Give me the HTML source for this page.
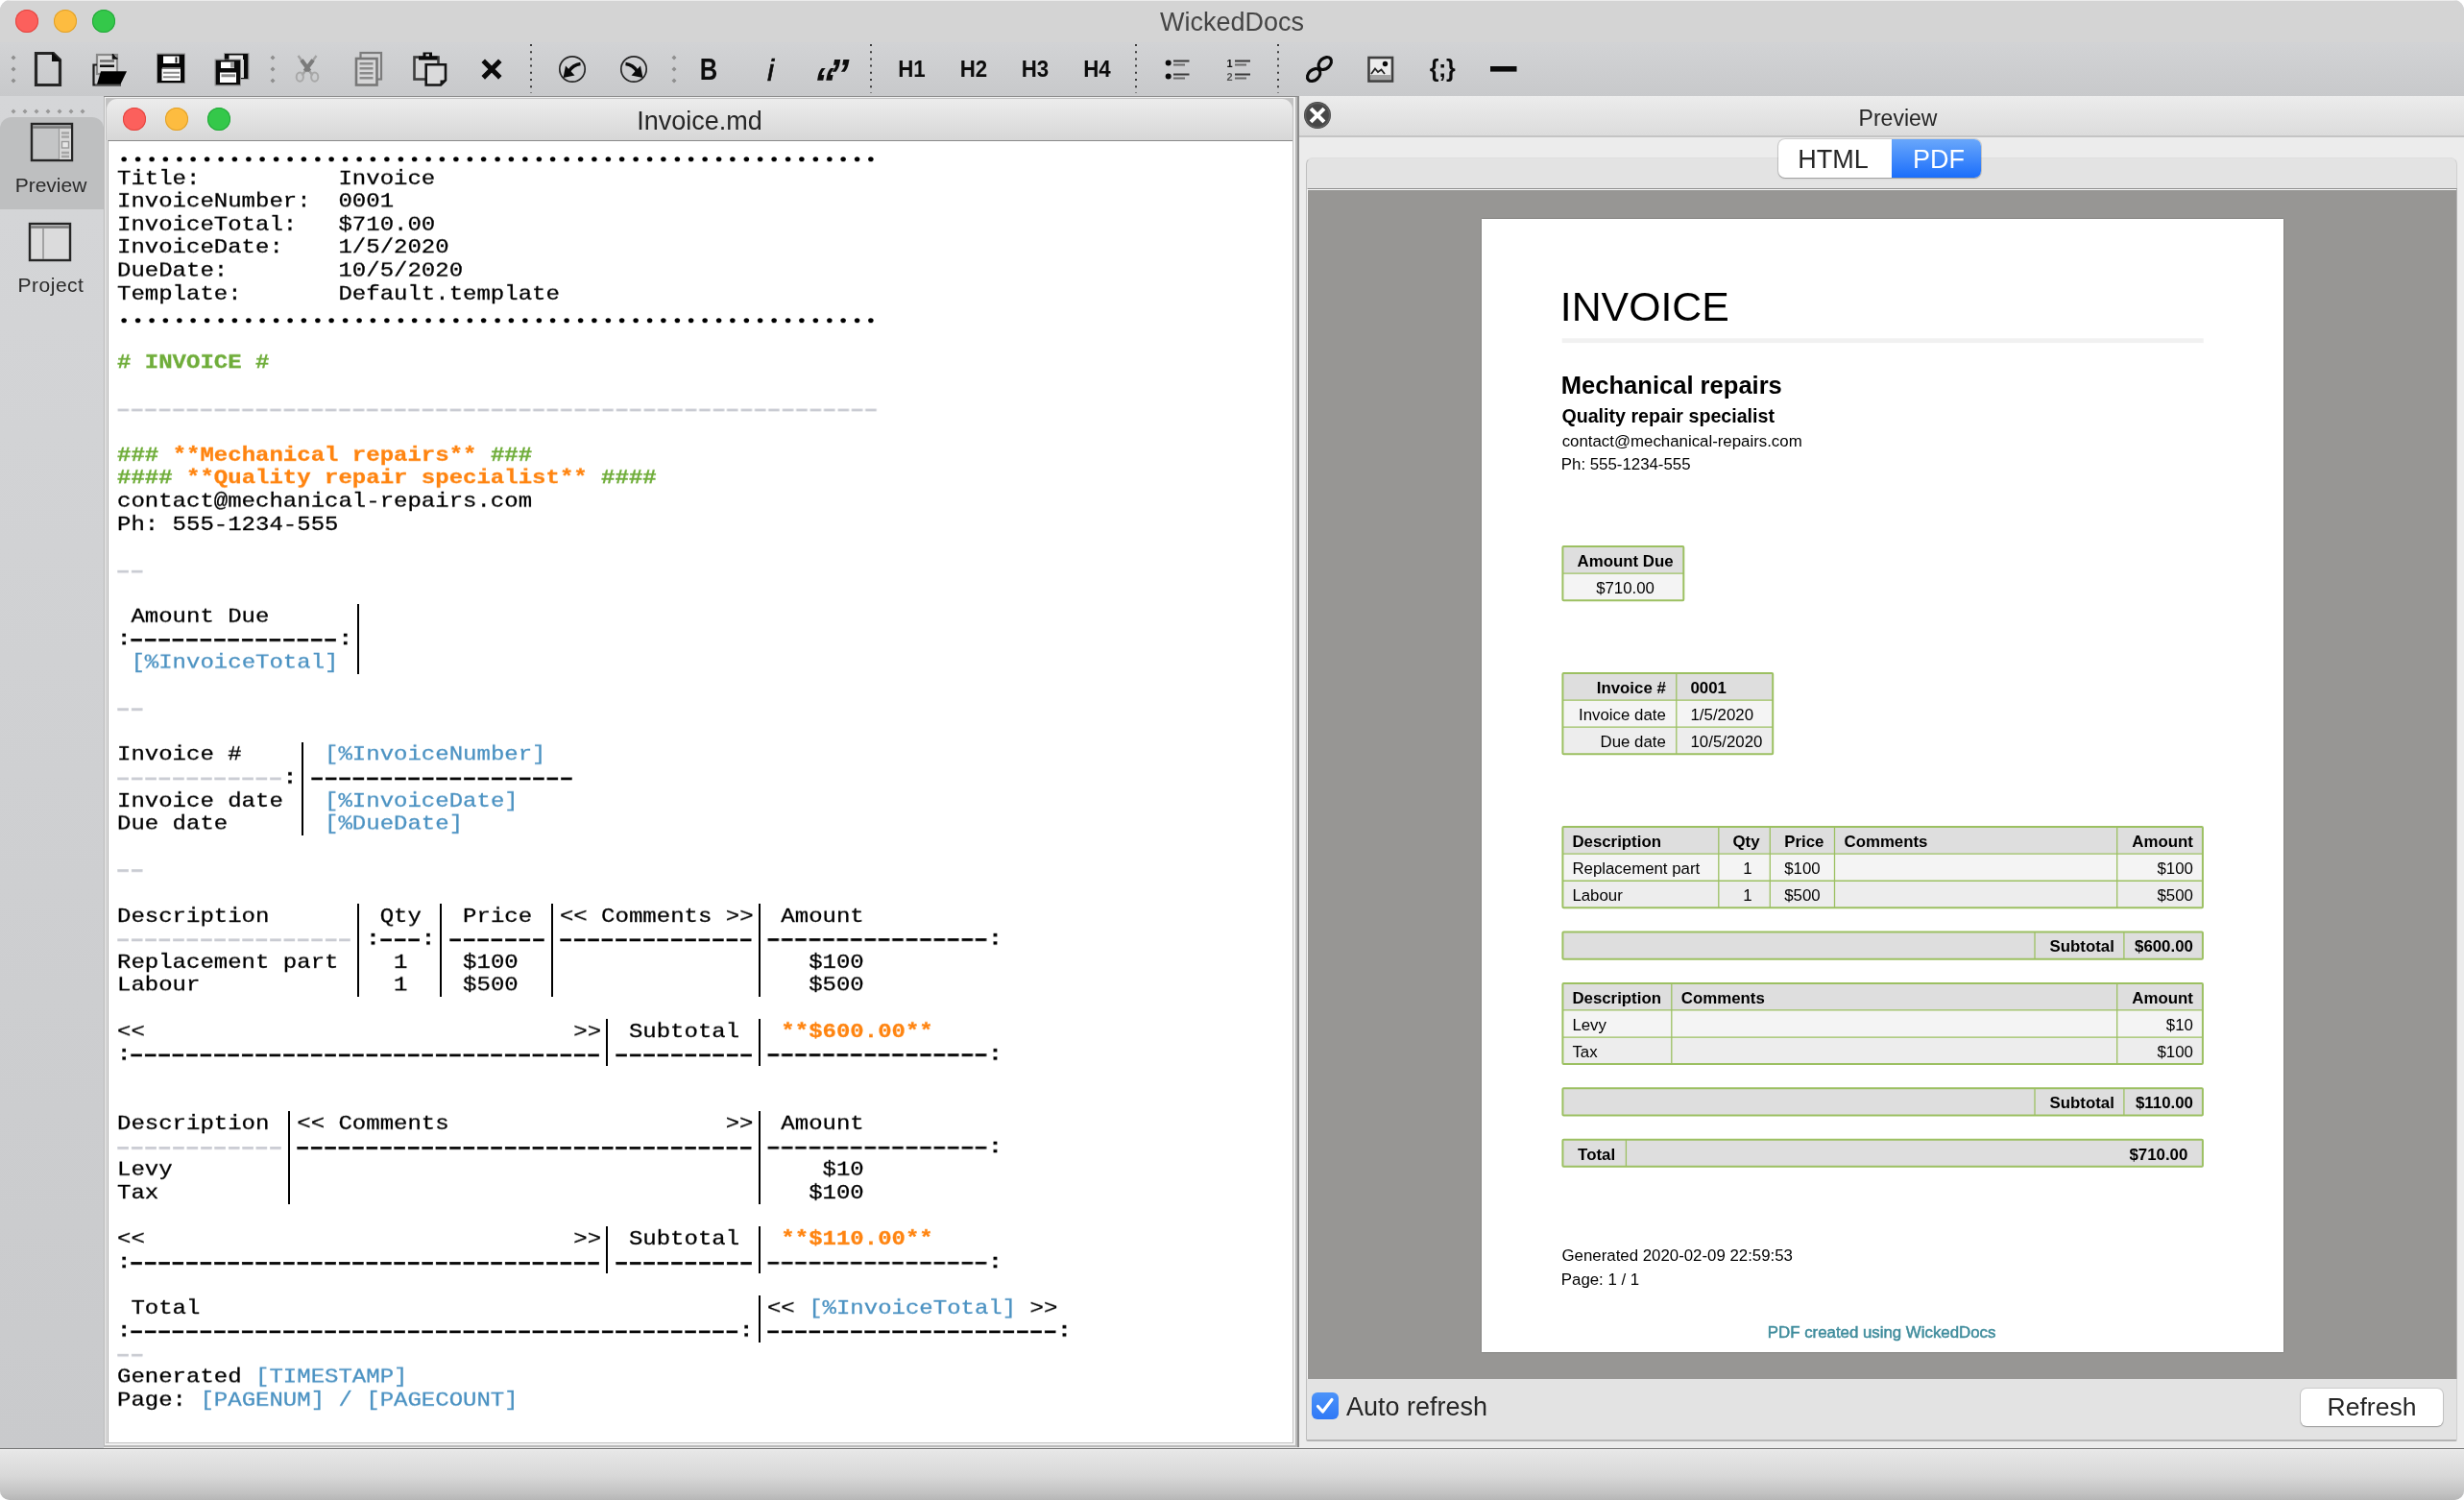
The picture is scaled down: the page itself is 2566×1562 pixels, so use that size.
<!DOCTYPE html>
<html lang="en">
<head>
<meta charset="utf-8">
<title>WickedDocs</title>
<style>
*{box-sizing:border-box;margin:0;padding:0}
html,body{width:2566px;height:1562px;overflow:hidden;background:#fff}
body{font-family:"Liberation Sans",sans-serif;color:#222;position:relative}
.abs{position:absolute}
#win{will-change:transform;position:absolute;left:0;top:0;width:2566px;height:1562px;border-radius:11px 11px 10px 10px;overflow:hidden;background:#d5d6d8}
#top{position:absolute;left:0;top:0;width:2566px;height:100px;background:linear-gradient(#d4d4d4 0,#d4d4d4 44px,#d2d3d5 44px,#c8c9cb 100px)}
#top:before{content:"";position:absolute;left:0;top:0;width:100%;height:1px;background:#ebebeb}
.tl{position:absolute;width:24px;height:24px;border-radius:50%}
.tl.r{background:#fc605c;box-shadow:inset 0 0 0 1px #e2453f}
.tl.y{background:#fdbc40;box-shadow:inset 0 0 0 1px #e0a028}
.tl.g{background:#34c84a;box-shadow:inset 0 0 0 1px #24a73a}
#wtitle{position:absolute;left:0;top:7px;width:2566px;text-align:center;font-size:27px;line-height:32px;color:#454545}
/* sidebar */
#side{z-index:2;position:absolute;left:0;top:100px;width:108px;height:1408px;background:linear-gradient(#d5d6d8,#c9cacc)}
#side .sel{position:absolute;left:0;top:22px;width:108px;height:96px;background:#bebfc0;border-radius:12px 12px 0 0}
.slabel{position:absolute;left:0;width:104px;text-align:center;font-size:21px;line-height:24px;color:#2a2a2a}
/* editor */
#edframe{position:absolute;left:108px;top:100px;width:1245px;height:1407px;background:#8c8c8c}
#edframe .l2{position:absolute;left:0;top:1px;width:1243px;height:1406px;background:#b9b9b9}
#edframe .l3{position:absolute;left:1px;top:1px;width:1240px;height:1404px;background:#f0f0f0}
#edwin{position:absolute;left:110px;top:102px;width:1237px;height:1401px;background:#c2c2c2}
#edtitle{position:absolute;left:1px;top:1px;width:1235px;height:43px;border-radius:11px 11px 0 0;background:linear-gradient(#ececec,#d7d7d7)}
#edbody{position:absolute;left:1px;top:44px;width:1235px;height:1356px;background:#eee}
#edbody i{position:absolute;left:1px;top:0;width:1234px;height:1356px;background:#fff;border-left:1px solid #ababab;border-top:1px solid #8a8a8a}
#edtitle .t{position:absolute;left:-1px;top:7px;width:1237px;text-align:center;font-size:27px;line-height:32px;color:#262626}
pre#code{position:absolute;left:122px;top:150.2px;font-family:"Liberation Mono",monospace;font-size:24px;line-height:27.586px;color:#000;white-space:pre;-webkit-text-stroke-width:.3px;transform:scaleY(.87);transform-origin:0 0}
pre#code b{font-weight:bold}
.g{color:#6fad3a;font-weight:bold}
.o{color:#ff8410;font-weight:bold}
.b{color:#4b92c2}
.d{color:#c9ccd3}
.p{color:transparent}
.vl{position:absolute;width:2px;background:#000}
.h{display:inline-block;font-weight:bold;letter-spacing:-5.5px;transform:translate(-5.4px,0.7px) scaleX(1.62);transform-origin:0 50%;white-space:pre}
.dots{font-family:"Liberation Serif",serif;font-weight:bold;font-size:35px;letter-spacing:5.653px;line-height:0;position:relative;left:2.83px;top:.8px;-webkit-text-stroke-width:0}
/* preview */
#pv{position:absolute;left:1353px;top:100px;width:1213px;height:1408px;background:#ececec}
#status{position:absolute;left:0;top:1507px;width:2566px;height:55px;background:linear-gradient(#eee 0,#eee 1px,#707070 1px,#707070 2px,#f4f4f4 2px,#f4f4f4 3px,#e7e7e7 3px,#d8d8d8 30px,#c2c2c2 48px,#b6b6b6 55px)}

#pvtitle{position:absolute;left:0;top:0;width:1213px;height:43px;background:linear-gradient(#ececec,#dcdcdc);border-bottom:2px solid #c4c4c4}
#pvtitle .t{position:absolute;left:34px;top:8px;width:1179px;text-align:center;font-size:23px;line-height:30px;color:#262626}
#tabframe{position:absolute;left:7px;top:64px;width:1199px;height:1337px;background:#e3e3e3;border:1px solid #dedede;border-left-color:#bebebe;border-right-color:#d0d0d0;border-bottom:2px solid #b4b4b4;border-radius:7px 7px 2px 2px}
#gray{position:absolute;left:0;top:31px;width:1198px;height:1240px;background:#979694;border-top:1px solid #8c8c8c;border-left:1px solid #fafafa;border-right:1px solid #b2b2b2;box-shadow:inset 0 1px 0 #fafafa}
#paper{position:absolute;left:182px;top:63px;width:835px;height:1180px;background:#fff;box-shadow:0 0 1.5px rgba(0,0,0,.35)}
#paper svg{position:absolute;left:0;top:0}
#seg{position:absolute;left:499px;top:45px;width:211px;height:40px;border-radius:7px;background:#fff;box-shadow:0 0 0 1px rgba(0,0,0,.13),0 1px 1.5px rgba(0,0,0,.22);font-size:27px;line-height:43px;overflow:hidden}
#seg .s1{position:absolute;left:-2px;top:0;width:118px;height:40px;text-align:center;color:#262626}
#seg .s2{position:absolute;left:118px;top:0;width:93px;height:40px;text-align:center;padding-left:5px;color:#fff;background:linear-gradient(#69a7fb,#1b6efb)}
#cb{position:absolute;left:5px;top:1285px;width:28px;height:28px;border-radius:6px;background:linear-gradient(#4c93f9,#2f78f6)}
#cblabel{position:absolute;left:41px;top:1284px;font-size:27px;line-height:32px;color:#262626}
#refresh{position:absolute;left:1035px;top:1281px;width:148px;height:39px;border-radius:6px;background:#fff;box-shadow:0 0 0 1px rgba(0,0,0,.1),0 1px 1.5px rgba(0,0,0,.25);text-align:center;font-size:26.5px;line-height:39px;color:#262626}
</style>
</head>
<body>
<div id="win">
<div id="top">
<div class="tl r" style="left:16px;top:10px"></div>
<div class="tl y" style="left:56px;top:10px"></div>
<div class="tl g" style="left:96px;top:10px"></div>
<div id="wtitle">WickedDocs</div>
<svg class="abs" style="left:0;top:0" width="2566" height="100" viewBox="0 0 2566 100" font-family="Liberation Sans, sans-serif">
<g fill="#8f8f8f">
<path d="M14 57.5l2.5 2.5-2.5 2.5-2.5-2.5zM14 69.5l2.5 2.5-2.5 2.5-2.5-2.5zM14 81.500l2.5 2.5-2.5 2.5-2.5-2.5z"/>
<path d="M284 57.5l2.500 2.5-2.5 2.5-2.5-2.5zM284 69.500l2.5 2.5-2.5 2.5-2.5-2.5zM284 81.5l2.5 2.500-2.5 2.5-2.5-2.5z"/>
<path d="M702 57.5l2.5 2.5-2.500 2.5-2.5-2.5zM702 69.5l2.5 2.5-2.5 2.500-2.5-2.5zM702 81.5l2.5 2.5-2.5 2.5-2.500-2.5z"/>
</g>
<g stroke="#3c3c3c" stroke-width="2" stroke-dasharray="2 5.2" fill="none">
<path d="M553 46V97M907 46V97M1183 46V97M1331 46V97"/>
</g>
<!-- new -->
<path d="M37.500 55.500H55.500L62.500 62.500V88.500H37.500Z" fill="none" stroke="#262626" stroke-width="3.2" stroke-linejoin="miter"/>
<path d="M54 54.500V64H63.500Z" fill="#0c0c0c"/>
<!-- open -->
<rect x="101" y="57" width="21" height="20" fill="#dcdcdc" stroke="#8a8a8a" stroke-width="2.2"/>
<path d="M117.500 56v5h5" fill="#111" stroke="#111" stroke-width="1.500"/>
<path d="M104 63.500H119" stroke="#6f6f6f" stroke-width="2.400"/>
<path d="M104 68.700H119" stroke="#111" stroke-width="2.400"/>
<path d="M101 67.500H97.500V88.500H126" fill="none" stroke="#1a1a1a" stroke-width="2.200"/>
<path d="M105 74.300H132L125.500 87.800H101Z" fill="#000"/>
<path d="M99 89H126" stroke="#666" stroke-width="1.600"/>
<!-- save -->
<rect x="164" y="56.500" width="28" height="29.500" fill="#050505"/>
<rect x="163.500" y="56" width="29" height="30.500" fill="none" stroke="#777" stroke-width="1" opacity=".7"/>
<rect x="170" y="58.500" width="16.500" height="7.500" fill="#fff"/>
<rect x="182.500" y="59.500" width="2" height="6" fill="#111"/>
<rect x="168.500" y="71.500" width="19.500" height="12.500" fill="#fff"/>
<path d="M169 70.700H188" stroke="#777" stroke-width="1.400"/>
<path d="M170 75.800H187M170 80.200H187" stroke="#8c8c8c" stroke-width="2"/>
<!-- save all -->
<rect x="234" y="56" width="24.500" height="26" fill="#0a0a0a"/>
<rect x="238.500" y="57.500" width="14.500" height="5" fill="#e9e9e9"/>
<rect x="250.500" y="62" width="3.500" height="19" fill="#d8d8d8"/>
<rect x="233.500" y="55.500" width="25.500" height="27" fill="none" stroke="#888" stroke-width="1" opacity=".7"/>
<rect x="224.500" y="62.500" width="25.500" height="26" fill="#0a0a0a"/>
<rect x="224" y="62" width="26.500" height="27" fill="none" stroke="#888" stroke-width="1" opacity=".8"/>
<rect x="230" y="64.500" width="14" height="6.500" fill="#fff"/>
<rect x="240" y="65" width="4" height="5.500" fill="#9a9a9a"/>
<rect x="229" y="75.500" width="17" height="10.500" fill="#fff"/>
<path d="M230.500 78.800H245" stroke="#8a8a8a" stroke-width="3"/>
<!-- cut -->
<g fill="none" stroke-linecap="butt">
<path d="M310.500 58L325.500 78.500M329.500 58L314.500 78.500" stroke="#a2a2a2" stroke-width="2.400"/>
<path d="M314 62.500L322.500 74M326 62.500L317.500 74" stroke="#7b7b7b" stroke-width="4.200"/>
<ellipse cx="312.300" cy="80.200" rx="3.600" ry="4.600" stroke="#a8a8a8" stroke-width="2"/>
<ellipse cx="327.700" cy="80.200" rx="3.600" ry="4.600" stroke="#a8a8a8" stroke-width="2"/>
</g>
<!-- copy -->
<rect x="375.500" y="55" width="21.500" height="27.500" fill="#d3d3d4" stroke="#7c7c7c" stroke-width="2.200"/>
<rect x="371" y="61" width="21.500" height="27.500" fill="#d6d6d7" stroke="#777" stroke-width="2.600"/>
<path d="M374.500 66.300H388.500M374.500 71.300H388.500M374.500 76.300H388.500M374.500 81.300H388.500" stroke="#8b8b8b" stroke-width="2.600"/>
<!-- paste -->
<rect x="431.500" y="59.500" width="25" height="23" fill="#d4d4d5" stroke="#3d3d3d" stroke-width="2.600"/>
<rect x="436" y="58.500" width="19.500" height="4" fill="#0a0a0a"/>
<rect x="440.500" y="54.500" width="9.500" height="5" fill="#0a0a0a"/>
<rect x="443.500" y="56.300" width="3.500" height="2.200" fill="#ddd"/>
<path d="M443.700 67.200H464V83.500L459 88.500H443.700Z" fill="#dadadb" stroke="#141414" stroke-width="2.600"/>
<path d="M458.500 89V83.500H464.500Z" fill="#141414"/>
<!-- delete -->
<path d="M505 65.100L519 79.100M519 65.100L505 79.100" stroke="#0a0a0a" stroke-width="5" stroke-linecap="square" fill="none"/>
<!-- undo -->
<circle cx="596" cy="72" r="13.200" fill="none" stroke="#262626" stroke-width="1.700"/>
<path d="M604.500 66.500C599 67 595 70 592 75" fill="none" stroke="#0a0a0a" stroke-width="3.600"/>
<path d="M586.500 81L589 68.500L598.500 78.500Z" fill="#0a0a0a"/>
<!-- redo -->
<circle cx="660" cy="72" r="13.200" fill="none" stroke="#262626" stroke-width="1.700"/>
<path d="M651.500 66.500C657 67 661 70 664 75" fill="none" stroke="#0a0a0a" stroke-width="3.600"/>
<path d="M669.500 81L667 68.500L657.500 78.500Z" fill="#0a0a0a"/>
<g fill="#0c0c0c" font-weight="bold" text-anchor="middle">
<text transform="translate(738 83.300) scale(.8 1)" font-size="32">B</text>
<text x="802.500" y="84" font-size="32" font-style="italic" font-weight="normal" stroke="#0c0c0c" stroke-width=".6">i</text>
<text x="858" y="101.500" font-size="44" font-style="italic">“</text>
<text x="873.500" y="92.500" font-size="44" font-style="italic">”</text>
<text x="949.500" y="79.700" font-size="24.500" textLength="28.500" lengthAdjust="spacingAndGlyphs">H1</text>
<text x="1014" y="79.700" font-size="24.500" textLength="28.500" lengthAdjust="spacingAndGlyphs">H2</text>
<text x="1078" y="79.700" font-size="24.500" textLength="28.500" lengthAdjust="spacingAndGlyphs">H3</text>
<text x="1142.500" y="79.700" font-size="24.500" textLength="28.500" lengthAdjust="spacingAndGlyphs">H4</text>
<text x="1502" y="80" font-size="25" letter-spacing="-.5">{;}</text>
</g>
<!-- ul -->
<circle cx="1216.700" cy="65.400" r="3" fill="#0a0a0a"/><circle cx="1216.700" cy="79.600" r="3" fill="#0a0a0a"/>
<path d="M1222 63.500H1238.500M1222 77.500H1238.500" stroke="#3a3a3a" stroke-width="2.200"/>
<path d="M1222 67.500H1234M1222 81.500H1234" stroke="#6a6a6a" stroke-width="2.200"/>
<!-- ol -->
<text x="1280.600" y="70" font-size="11" font-weight="bold" text-anchor="middle" fill="#111">1</text>
<text x="1280.600" y="84" font-size="11" font-weight="bold" text-anchor="middle" fill="#555">2</text>
<path d="M1286 63.500H1302M1286 77.500H1302" stroke="#3a3a3a" stroke-width="2.200"/>
<path d="M1286 67.500H1298M1286 81.500H1298" stroke="#6a6a6a" stroke-width="2.200"/>
<!-- link -->
<g fill="none" stroke="#0a0a0a" stroke-width="3.200">
<ellipse cx="1368.200" cy="78" rx="7.600" ry="5.400" transform="rotate(-42 1368.200 78)"/>
<ellipse cx="1379.800" cy="66" rx="7.600" ry="5.400" transform="rotate(-42 1379.800 66)"/>
</g>
<!-- image -->
<rect x="1425.500" y="60" width="24.500" height="24.500" fill="#ececec" stroke="#3f3f3f" stroke-width="2.600"/>
<rect x="1427" y="78" width="21.500" height="5" fill="#a3a3a3"/>
<circle cx="1442.500" cy="66.500" r="2.700" fill="#0a0a0a"/>
<path d="M1428 77L1432 71.500L1435 75L1438.500 72.500L1442 77" fill="none" stroke="#222" stroke-width="1.800"/>
<!-- hr -->
<rect x="1552" y="69" width="27.500" height="5.600" fill="#0a0a0a"/>
</svg>

</div>
<div id="side">
<div class="sel"></div>
<svg class="abs" style="left:0;top:0" width="108" height="220" viewBox="0 0 108 220">
<path fill="#999" d="M14 13.500l2.500 2.500-2.500 2.500-2.500-2.500zM26 13.500l2.500 2.500-2.500 2.500-2.500-2.500zM38 13.500l2.500 2.500-2.500 2.500-2.500-2.500zM50 13.500l2.500 2.500-2.500 2.500-2.500-2.500zM62 13.500l2.500 2.500-2.500 2.500-2.500-2.500zM74 13.500l2.500 2.500-2.500 2.500-2.500-2.500zM86 13.500l2.500 2.500-2.500 2.500-2.500-2.500z"/>
<!-- preview icon: x32-76, y28-68 -->
<rect x="33" y="29" width="42" height="38" fill="#c4c5c6" stroke="#262626" stroke-width="2.400"/>
<path d="M34 32.500H74" stroke="#7a7a7a" stroke-width="2.600"/>
<rect x="61" y="34" width="13" height="32" fill="#d8d8d8"/>
<path d="M61.500 34V66" stroke="#9a9a9a" stroke-width="1.200"/>
<path d="M64 38.500H72M64 42.500H72M64 59H72M64 63H72" stroke="#a4a4a4" stroke-width="2.400"/>
<rect x="64.500" y="47.500" width="7" height="6.500" fill="#e6e6e6" stroke="#9a9a9a" stroke-width="1.400"/>
<!-- project icon: x30-74, y132-172 -->
<rect x="31" y="133" width="42" height="38" fill="#dbdbdc" stroke="#262626" stroke-width="2.400"/>
<path d="M32 136.500H72" stroke="#7a7a7a" stroke-width="2.600"/>
<path d="M45 138V170" stroke="#8a8a8a" stroke-width="1.400"/>
</svg>

<div class="slabel" style="top:80.5px;left:1px">Preview</div>
<div class="slabel" style="top:184.5px;letter-spacing:.5px;left:1px">Project</div>
</div>
<div id="edframe"><div class="l2"></div><div class="l3"></div></div>
<div id="edwin">
<div id="edtitle">
<div class="tl r" style="left:17px;top:9px"></div>
<div class="tl y" style="left:61px;top:9px"></div>
<div class="tl g" style="left:105px;top:9px"></div>
<div class="t">Invoice.md</div>
</div>
<div id="edbody"><i></i></div>
</div>
<pre id="code"><span class="dots">.......................................................</span>
Title:          Invoice
InvoiceNumber:  0001
InvoiceTotal:   $710.00
InvoiceDate:    1/5/2020
DueDate:        10/5/2020
Template:       Default.template
<span class="dots">.......................................................</span>

<span class="g"># INVOICE #</span>

<span class="d"><span class="h" style="width:792.1px">-------------------------------------------------------</span></span>

<span class="g">###</span> <span class="o">**Mechanical repairs**</span> <span class="g">###</span>
<span class="g">####</span> <span class="o">**Quality repair specialist**</span> <span class="g">####</span>
contact@mechanical-repairs.com
Ph: 555-1234-555

<span class="d"><span class="h" style="width:28.8px">--</span></span>

 Amount Due      <span class="p">|</span>
<b>:</b><span class="h" style="width:216.0px">---------------</span><b>:</b><span class="p">|</span>
 <span class="b">[%InvoiceTotal]</span> <span class="p">|</span>

<span class="d"><span class="h" style="width:28.8px">--</span></span>

Invoice #    <span class="p">|</span> <span class="b">[%InvoiceNumber]</span>
<span class="d"><span class="h" style="width:172.8px">------------</span></span><b>:</b><span class="p">|</span><span class="h" style="width:273.6px">-------------------</span>
Invoice date <span class="p">|</span> <span class="b">[%InvoiceDate]</span>
Due date     <span class="p">|</span> <span class="b">[%DueDate]</span>

<span class="d"><span class="h" style="width:28.8px">--</span></span>

Description      <span class="p">|</span> Qty <span class="p">|</span> Price <span class="p">|</span>&lt;&lt; Comments &gt;&gt;<span class="p">|</span> Amount
<span class="d"><span class="h" style="width:244.8px">-----------------</span></span><span class="p">|</span><b>:</b><span class="h" style="width:43.2px">---</span><b>:</b><span class="p">|</span><span class="h" style="width:100.8px">-------</span><span class="p">|</span><span class="h" style="width:201.6px">--------------</span><span class="p">|</span><span class="h" style="width:230.4px">----------------</span><b>:</b>
Replacement part <span class="p">|</span>  1  <span class="p">|</span> $100  <span class="p">|</span>              <span class="p">|</span>   $100
Labour           <span class="p">|</span>  1  <span class="p">|</span> $500  <span class="p">|</span>              <span class="p">|</span>   $500

&lt;&lt;                               &gt;&gt;<span class="p">|</span> Subtotal <span class="p">|</span> <span class="o">**$600.00**</span>
<b>:</b><span class="h" style="width:489.7px">----------------------------------</span><span class="p">|</span><span class="h" style="width:144.0px">----------</span><span class="p">|</span><span class="h" style="width:230.4px">----------------</span><b>:</b>


Description <span class="p">|</span>&lt;&lt; Comments                    &gt;&gt;<span class="p">|</span> Amount
<span class="d"><span class="h" style="width:172.8px">------------</span></span><span class="p">|</span><span class="h" style="width:475.3px">---------------------------------</span><span class="p">|</span><span class="h" style="width:230.4px">----------------</span><b>:</b>
Levy        <span class="p">|</span>                                 <span class="p">|</span>    $10
Tax         <span class="p">|</span>                                 <span class="p">|</span>   $100

&lt;&lt;                               &gt;&gt;<span class="p">|</span> Subtotal <span class="p">|</span> <span class="o">**$110.00**</span>
<b>:</b><span class="h" style="width:489.7px">----------------------------------</span><span class="p">|</span><span class="h" style="width:144.0px">----------</span><span class="p">|</span><span class="h" style="width:230.4px">----------------</span><b>:</b>

 Total                                        <span class="p">|</span>&lt;&lt; <span class="b">[%InvoiceTotal]</span> &gt;&gt;
<b>:</b><span class="h" style="width:633.7px">--------------------------------------------</span><b>:</b><span class="p">|</span><span class="h" style="width:302.4px">---------------------</span><b>:</b>
<span class="d"><span class="h" style="width:28.8px">--</span></span>
Generated <span class="b">[TIMESTAMP]</span>
Page: <span class="b">[PAGENUM] / [PAGECOUNT]</span></pre>
<i class="vl" style="left:300px;top:1157px;height:97px"></i><i class="vl" style="left:314px;top:773px;height:97px"></i><i class="vl" style="left:372px;top:629px;height:73px"></i><i class="vl" style="left:372px;top:941px;height:97px"></i><i class="vl" style="left:458px;top:941px;height:97px"></i><i class="vl" style="left:574px;top:941px;height:97px"></i><i class="vl" style="left:631px;top:1061px;height:49px"></i><i class="vl" style="left:631px;top:1277px;height:49px"></i><i class="vl" style="left:790px;top:941px;height:97px"></i><i class="vl" style="left:790px;top:1061px;height:49px"></i><i class="vl" style="left:790px;top:1157px;height:97px"></i><i class="vl" style="left:790px;top:1277px;height:49px"></i><i class="vl" style="left:790px;top:1349px;height:49px"></i>
<div id="pv">
<div id="pvtitle"><div class="t">Preview</div>
<svg class="abs" style="left:4px;top:5px" width="30" height="30" viewBox="0 0 30 30"><circle cx="15" cy="15" r="14" fill="#474747"/><circle cx="15" cy="15" r="12.6" fill="none" stroke="#5e5e5e" stroke-width="1.5"/><path d="M9.5 9.5L20.5 20.5M20.5 9.5L9.5 20.5" stroke="#fff" stroke-width="4" stroke-linecap="square"/></svg>
</div>
<div id="tabframe">
<div id="gray"></div>
<div id="paper"><svg id="page" width="835" height="1180" viewBox="0 0 835 1180" font-family="Liberation Sans, sans-serif">
<text x="81.80" y="106.00" font-size="42.8" fill="#000">INVOICE</text>
<rect x="83.70" y="124.30" width="668.00" height="4.80" fill="#f1f1f1"/>
<text x="82.80" y="181.70" font-size="25.55" font-weight="bold" fill="#000">Mechanical repairs</text>
<text x="83.40" y="212.20" font-size="19.65" font-weight="bold" fill="#000">Quality repair specialist</text>
<text x="83.70" y="236.50" font-size="16.84" fill="#000">contact@mechanical-repairs.com</text>
<text x="82.80" y="261.00" font-size="16.84" fill="#000">Ph: 555-1234-555</text>
<rect x="84.40" y="341.00" width="125.90" height="28.07" fill="#dedede"/>
<rect x="84.40" y="369.07" width="125.90" height="28.07" fill="#f4f4f4"/>
<path d="M84.40 369.07L210.30 369.07" stroke="#9cc062" stroke-width="1.3" fill="none"/>
<rect x="84.40" y="341.00" width="125.90" height="56.14" fill="none" stroke="#9cc062" stroke-width="2" rx="1"/>
<text x="149.55" y="361.90" font-size="16.84" font-weight="bold" text-anchor="middle" fill="#000">Amount Due</text>
<text x="149.55" y="389.97" font-size="16.84" text-anchor="middle" fill="#000">$710.00</text>
<rect x="84.40" y="473.00" width="218.80" height="28.07" fill="#dedede"/>
<rect x="84.40" y="501.07" width="218.80" height="28.07" fill="#f4f4f4"/>
<rect x="84.40" y="529.14" width="218.80" height="28.07" fill="#ededed"/>
<path d="M84.40 501.07L303.20 501.07" stroke="#9cc062" stroke-width="1.3" fill="none"/>
<path d="M84.40 529.14L303.20 529.14" stroke="#9cc062" stroke-width="1.3" fill="none"/>
<path d="M202.80 473.00L202.80 557.21" stroke="#9cc062" stroke-width="1.3" fill="none"/>
<rect x="84.40" y="473.00" width="218.80" height="84.21" fill="none" stroke="#9cc062" stroke-width="2" rx="1"/>
<text x="191.80" y="493.90" font-size="16.84" font-weight="bold" text-anchor="end" fill="#000">Invoice #</text>
<text x="217.50" y="493.90" font-size="16.84" font-weight="bold" fill="#000">0001</text>
<text x="191.80" y="521.97" font-size="16.84" text-anchor="end" fill="#000">Invoice date</text>
<text x="217.50" y="521.97" font-size="16.84" fill="#000">1/5/2020</text>
<text x="191.80" y="550.04" font-size="16.84" text-anchor="end" fill="#000">Due date</text>
<text x="217.50" y="550.04" font-size="16.84" fill="#000">10/5/2020</text>
<rect x="84.40" y="633.10" width="666.50" height="28.07" fill="#dedede"/>
<rect x="84.40" y="661.17" width="666.50" height="28.07" fill="#f4f4f4"/>
<rect x="84.40" y="689.24" width="666.50" height="28.07" fill="#ededed"/>
<path d="M84.40 661.17L750.90 661.17" stroke="#9cc062" stroke-width="1.3" fill="none"/>
<path d="M84.40 689.24L750.90 689.24" stroke="#9cc062" stroke-width="1.3" fill="none"/>
<path d="M246.80 633.10L246.80 717.31" stroke="#9cc062" stroke-width="1.3" fill="none"/>
<path d="M300.30 633.10L300.30 717.31" stroke="#9cc062" stroke-width="1.3" fill="none"/>
<path d="M367.50 633.10L367.50 717.31" stroke="#9cc062" stroke-width="1.3" fill="none"/>
<path d="M661.70 633.10L661.70 717.31" stroke="#9cc062" stroke-width="1.3" fill="none"/>
<rect x="84.40" y="633.10" width="666.50" height="84.21" fill="none" stroke="#9cc062" stroke-width="2" rx="1"/>
<text x="94.40" y="654.00" font-size="16.84" font-weight="bold" fill="#000">Description</text>
<text x="275.55" y="654.00" font-size="16.84" font-weight="bold" text-anchor="middle" fill="#000">Qty</text>
<text x="335.90" y="654.00" font-size="16.84" font-weight="bold" text-anchor="middle" fill="#000">Price</text>
<text x="377.50" y="654.00" font-size="16.84" font-weight="bold" fill="#000">Comments</text>
<text x="740.90" y="654.00" font-size="16.84" font-weight="bold" text-anchor="end" fill="#000">Amount</text>
<text x="94.40" y="682.07" font-size="16.84" fill="#000">Replacement part</text>
<text x="277.05" y="682.07" font-size="16.84" text-anchor="middle" fill="#000">1</text>
<text x="333.90" y="682.07" font-size="16.84" text-anchor="middle" fill="#000">$100</text>
<text x="740.90" y="682.07" font-size="16.84" text-anchor="end" fill="#000">$100</text>
<text x="94.40" y="710.14" font-size="16.84" fill="#000">Labour</text>
<text x="277.05" y="710.14" font-size="16.84" text-anchor="middle" fill="#000">1</text>
<text x="333.90" y="710.14" font-size="16.84" text-anchor="middle" fill="#000">$500</text>
<text x="740.90" y="710.14" font-size="16.84" text-anchor="end" fill="#000">$500</text>
<rect x="84.40" y="742.57" width="666.50" height="28.07" fill="#dedede"/>
<path d="M576.00 742.57L576.00 770.64" stroke="#9cc062" stroke-width="1.3" fill="none"/>
<path d="M668.90 742.57L668.90 770.64" stroke="#9cc062" stroke-width="1.3" fill="none"/>
<rect x="84.40" y="742.57" width="666.50" height="28.07" fill="none" stroke="#9cc062" stroke-width="2" rx="1"/>
<text x="658.90" y="763.47" font-size="16.84" font-weight="bold" text-anchor="end" fill="#000">Subtotal</text>
<text x="740.90" y="763.47" font-size="16.84" font-weight="bold" text-anchor="end" fill="#000">$600.00</text>
<rect x="84.40" y="795.90" width="666.50" height="28.07" fill="#dedede"/>
<rect x="84.40" y="823.97" width="666.50" height="28.07" fill="#f4f4f4"/>
<rect x="84.40" y="852.04" width="666.50" height="28.07" fill="#ededed"/>
<path d="M84.40 823.97L750.90 823.97" stroke="#9cc062" stroke-width="1.3" fill="none"/>
<path d="M84.40 852.04L750.90 852.04" stroke="#9cc062" stroke-width="1.3" fill="none"/>
<path d="M197.80 795.90L197.80 880.11" stroke="#9cc062" stroke-width="1.3" fill="none"/>
<path d="M661.70 795.90L661.70 880.11" stroke="#9cc062" stroke-width="1.3" fill="none"/>
<rect x="84.40" y="795.90" width="666.50" height="84.21" fill="none" stroke="#9cc062" stroke-width="2" rx="1"/>
<text x="94.40" y="816.80" font-size="16.84" font-weight="bold" fill="#000">Description</text>
<text x="207.80" y="816.80" font-size="16.84" font-weight="bold" fill="#000">Comments</text>
<text x="740.90" y="816.80" font-size="16.84" font-weight="bold" text-anchor="end" fill="#000">Amount</text>
<text x="94.40" y="844.87" font-size="16.84" fill="#000">Levy</text>
<text x="740.90" y="844.87" font-size="16.84" text-anchor="end" fill="#000">$10</text>
<text x="94.40" y="872.94" font-size="16.84" fill="#000">Tax</text>
<text x="740.90" y="872.94" font-size="16.84" text-anchor="end" fill="#000">$100</text>
<rect x="84.40" y="905.37" width="666.50" height="28.07" fill="#dedede"/>
<path d="M576.00 905.37L576.00 933.44" stroke="#9cc062" stroke-width="1.3" fill="none"/>
<path d="M668.90 905.37L668.90 933.44" stroke="#9cc062" stroke-width="1.3" fill="none"/>
<rect x="84.40" y="905.37" width="666.50" height="28.07" fill="none" stroke="#9cc062" stroke-width="2" rx="1"/>
<text x="658.90" y="926.27" font-size="16.84" font-weight="bold" text-anchor="end" fill="#000">Subtotal</text>
<text x="740.90" y="926.27" font-size="16.84" font-weight="bold" text-anchor="end" fill="#000">$110.00</text>
<rect x="84.40" y="958.70" width="666.50" height="28.07" fill="#dedede"/>
<path d="M150.40 958.70L150.40 986.77" stroke="#9cc062" stroke-width="1.3" fill="none"/>
<rect x="84.40" y="958.70" width="666.50" height="28.07" fill="none" stroke="#9cc062" stroke-width="2" rx="1"/>
<text x="119.60" y="979.60" font-size="16.84" font-weight="bold" text-anchor="middle" fill="#000">Total</text>
<text x="735.30" y="979.60" font-size="16.84" font-weight="bold" text-anchor="end" fill="#000">$710.00</text>
<text x="83.50" y="1084.60" font-size="16.84" fill="#000">Generated 2020-02-09 22:59:53</text>
<text x="82.80" y="1109.70" font-size="16.84" fill="#000">Page: 1 / 1</text>
<text x="416.60" y="1164.80" font-size="16.84" text-anchor="middle" fill="#3f8c9c" stroke="#3f8c9c" stroke-width="0.5">PDF created using WickedDocs</text>
</svg></div>
<div id="cb"><svg width="28" height="28" viewBox="0 0 28 28"><path d="M6.5 14.5L11.5 20L21 7.5" fill="none" stroke="#fff" stroke-width="3.2" stroke-linecap="round" stroke-linejoin="round"/></svg></div>
<div id="cblabel">Auto refresh</div>
<div id="refresh">Refresh</div>
</div>
<div id="seg"><div class="s1">HTML</div><div class="s2">PDF</div></div>

</div>
<div id="status"></div>
</div>
</body>
</html>
